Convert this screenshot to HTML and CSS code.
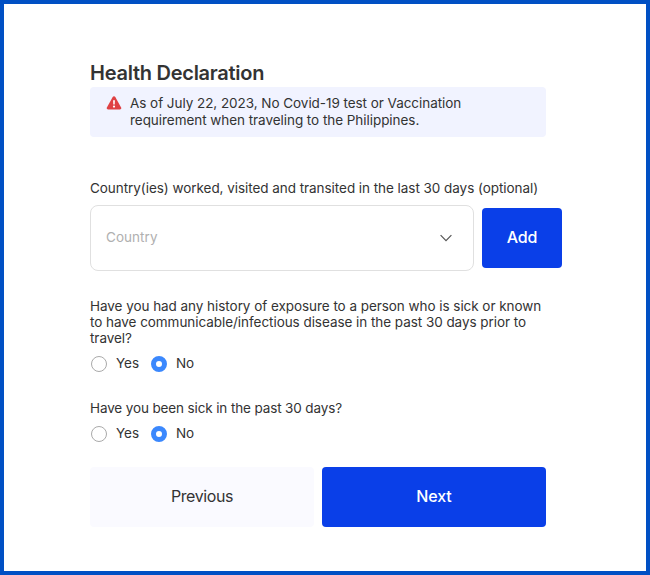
FILE: index.html
```html
<!DOCTYPE html>
<html lang="en">
<head>
    <meta charset="UTF-8">
    <meta name="viewport" content="width=device-width, initial-scale=1.0">
    <title>Health Declaration</title>
    <link rel="stylesheet" href="styles.css">
</head>
<body>
    <form class="form">
        <h1 class="title">Health Declaration</h1>
        <div class="notice">
            <svg class="noticeIcon" width="16" height="14" viewBox="0 0 16 14">
                <path d="M6.7 1.1a1.5 1.5 0 0 1 2.6 0l5.8 10.3a1.5 1.5 0 0 1-1.3 2.2H2.2a1.5 1.5 0 0 1-1.3-2.2z" fill="#df4144"/>
                <path d="M7.1 4.3h1.8l-.2 4.2H7.3z" fill="#fff"/>
                <circle cx="8" cy="10.6" r="1.1" fill="#fff"/>
            </svg>
            <p class="noticeText">As of July 22, 2023, No Covid-19 test or Vaccination<br>requirement when traveling to the Philippines.</p>
        </div>

        <p class="label countryLabel">Country(ies) worked, visited and transited in the last 30 days (optional)</p>
        <div class="countryRow">
            <div class="select">
                <span class="placeholder">Country</span>
                <svg width="12" height="8" viewBox="0 0 12 8">
                    <path d="M.6 1.2 6 6.6l5.4-5.4" fill="none" stroke="#555" stroke-width="1.2"/>
                </svg>
            </div>
            <button type="button" class="button primary addButton">Add</button>
        </div>

        <p class="label exposureLabel">Have you had any history of exposure to a person who is sick or known<br>to have communicable/infectious disease in the past 30 days prior to<br>travel?</p>
        <div class="radios">
            <label class="radio"><input type="radio" name="exposure"><span class="yes">Yes</span></label>
            <label class="radio"><input type="radio" name="exposure" checked><span>No</span></label>
        </div>

        <p class="label sickLabel">Have you been sick in the past 30 days?</p>
        <div class="radios">
            <label class="radio"><input type="radio" name="sick"><span class="yes">Yes</span></label>
            <label class="radio"><input type="radio" name="sick" checked><span>No</span></label>
        </div>

        <div class="actions">
            <button type="button" class="button secondary">Previous</button>
            <button type="button" class="button primary">Next</button>
        </div>
    </form>
</body>
</html>
```

FILE: styles.css
```css
* {
    box-sizing: border-box;
}
body {
    margin: 0;
    height: 575px;
    border: 4px solid #0050c4;
    background-color: #fff;
    color: #333;
    font-family: Inter, "Liberation Sans", sans-serif;
    font-size: 13.5px;
    line-height: 16px;
    letter-spacing: -0.05px;
    overflow: hidden;
}
h1, p {
    margin: 0;
    white-space: nowrap;
}
.form {
    width: 456px;
    margin: 57px 0 0 86px;
}
.title {
    font-size: 20px;
    line-height: 24px;
    font-weight: 600;
    letter-spacing: -0.26px;
    padding-bottom: 2px;
}
.notice {
    display: flex;
    gap: 8px;
    height: 50px;
    padding: 8px 16px;
    border-radius: 4px;
    background-color: #f1f3ff;
}
.noticeIcon {
    margin-top: 1px;
}
.noticeText {
    line-height: 17px;
    letter-spacing: -0.05px;
}
.countryLabel {
    margin-top: 43px;
}
.countryRow {
    display: flex;
    align-items: center;
    gap: 8px;
    width: 472px;
    margin-top: 9px;
}
.select {
    display: flex;
    align-items: center;
    justify-content: space-between;
    width: 384px;
    height: 66px;
    padding: 0 21px 0 15px;
    border: 1px solid #e0e0e0;
    border-radius: 8px;
}
.placeholder {
    padding-bottom: 2px;
    color: #b0b0b0;
    letter-spacing: 0.05px;
}
.button {
    height: 60px;
    padding: 0 0 2px;
    border: 0;
    border-radius: 4px;
    font-family: inherit;
    font-size: 16px;
    letter-spacing: -0.1px;
}
.primary {
    background-color: #0a3fe8;
    color: #fff;
    font-weight: 500;
}
.secondary {
    background-color: #fafaff;
    color: #333;
    letter-spacing: -0.4px;
}
.addButton {
    width: 80px;
}
.exposureLabel {
    margin-top: 27px;
}
.radios {
    display: flex;
    gap: 12px;
    margin-top: 9px;
}
.radio {
    display: flex;
    align-items: center;
    gap: 9px;
    height: 18px;
}
.radio input {
    appearance: none;
    width: 16px;
    height: 16px;
    margin: 0 0 0 1px;
    border: 1px solid #aaa;
    border-radius: 50%;
    background-color: #fff;
}
.radio input:checked {
    border: 5px solid #3b88fd;
}
.radio span {
    padding-bottom: 2px;
}
.yes {
    width: 22px;
}
.sickLabel {
    margin-top: 27px;
    letter-spacing: -0.13px;
}
.actions {
    display: grid;
    grid-template-columns: 1fr 1fr;
    gap: 8px;
    margin-top: 24px;
}
```
